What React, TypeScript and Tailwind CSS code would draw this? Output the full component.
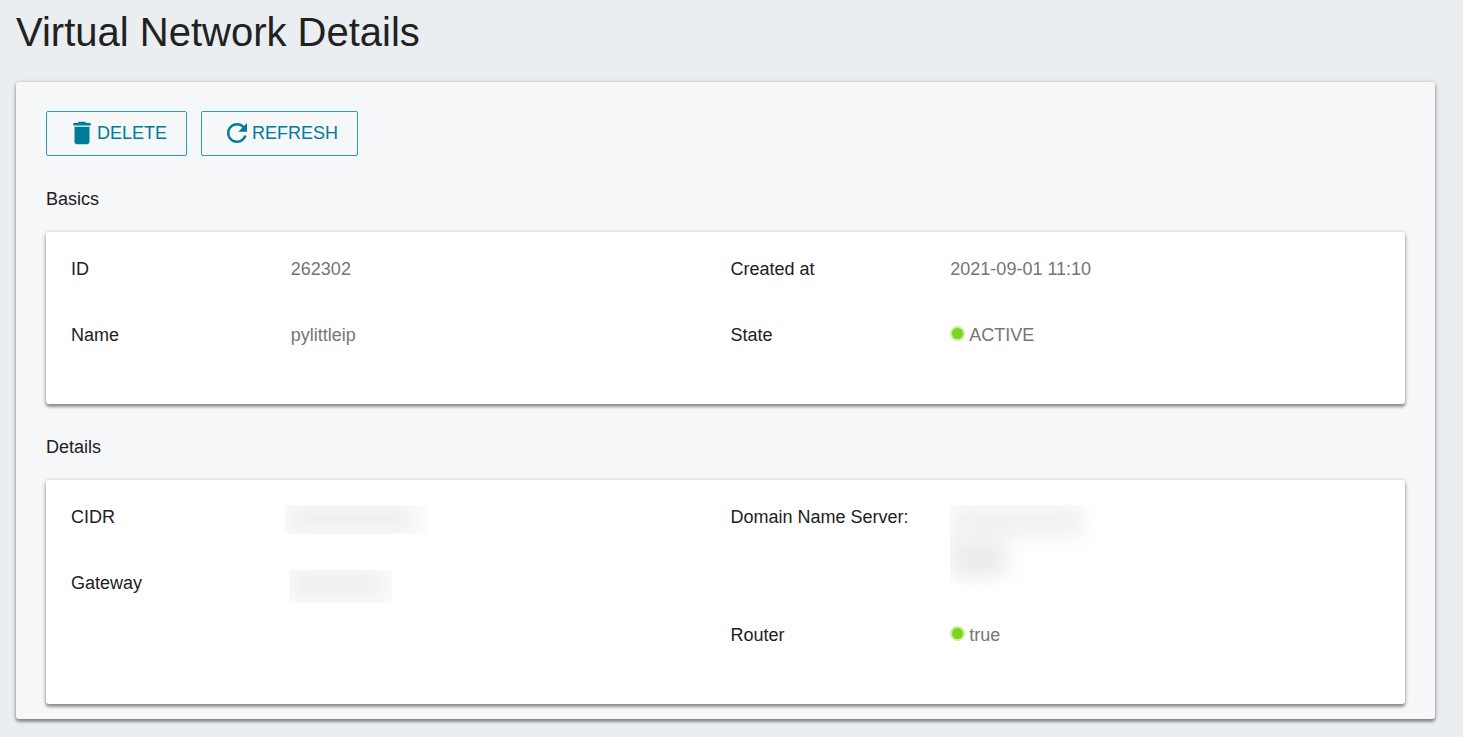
import type { ReactNode } from "react";

function Card({ className, children }: { className?: string; children: ReactNode }) {
  return (
    <div className={`${className} rounded-[3px] shadow-[0_1px_4px_rgba(0,0,0,0.3),0_3px_3px_rgba(0,0,0,0.3)]`}>
      {children}
    </div>
  );
}

function Row({ label, children }: { label: string; children: ReactNode }) {
  return (
    <div className="grid grid-cols-3 mb-10">
      <dt className="text-[#212121]">{label}</dt>
      <dd className="col-span-2 text-[#757575]">{children}</dd>
    </div>
  );
}

function Status({ children }: { children: ReactNode }) {
  return (
    <span className="flex items-center gap-1">
      <span className="w-[15px] h-[15px] mb-1 rounded-full bg-[#7ed321] border-2 border-[#c9efa0]" />
      <span>{children}</span>
    </span>
  );
}

export default function App() {
  return (
    <main className="min-h-screen bg-[#eaeef1] pl-4 pr-7 pb-4 font-['Liberation_Sans',Arial,sans-serif] text-[18px] leading-[26px] text-[#212121]">
      <h1 className="pt-1 pb-[22px] text-[40px] leading-[56px]">Virtual Network Details</h1>
      <Card className="bg-[#f5f7f9] px-[30px] pt-[29px] pb-[15px]">
        <div className="flex gap-[14px]">
          <button type="button" className="flex items-center h-[45px] pl-5 pr-[19px] pb-0.5 border border-[#25a0b5] rounded-[2px] text-[#007c99]">
            <svg viewBox="0 0 24 24" className="w-[30px] h-[30px] fill-current" aria-hidden="true">
              <path d="M6 19c0 1.1.9 2 2 2h8c1.1 0 2-.9 2-2V7H6v12zM19 4h-3.500l-1-1h-5l-1 1H5v2h14V4z" />
            </svg>
            DELETE
          </button>
          <button type="button" className="flex items-center h-[45px] pl-5 pr-[19px] pb-0.5 border border-[#25a0b5] rounded-[2px] text-[#007c99]">
            <svg viewBox="0 0 24 24" className="w-[30px] h-[30px] fill-current" aria-hidden="true">
              <path d="M17.650 6.350C16.200 4.900 14.210 4 12 4c-4.420 0-7.990 3.580-7.990 8s3.570 8 7.990 8c3.730 0 6.840-2.550 7.730-6h-2.080c-.82 2.330-3.040 4-5.650 4-3.310 0-6-2.690-6-6s2.690-6 6-6c1.660 0 3.140.69 4.220 1.780L13 11h7V4l-2.350 2.350z" />
            </svg>
            REFRESH
          </button>
        </div>

        <h2 className="mt-[30px] mb-5">Basics</h2>
        <Card className="bg-white grid grid-cols-2 pl-[25px] pr-[15px] pt-6 pb-4">
          <dl>
            <Row label="ID">262302</Row>
            <Row label="Name">pylittleip</Row>
          </dl>
          <dl>
            <Row label="Created at">2021-09-01 11:10</Row>
            <Row label="State">
              <Status>ACTIVE</Status>
            </Row>
          </dl>
        </Card>

        <h2 className="mt-[30px] mb-5">Details</h2>
        <Card className="bg-white grid grid-cols-2 pl-[25px] pr-[15px] pt-6 pb-4">
          <dl>
            {/* masked addresses */}
            <Row label="CIDR">
              <div className="h-[26px] pt-px -ml-1.5">
                <div className="w-[143px] h-[29px] overflow-hidden bg-[#fcfcfc]">
                  <div className="w-[124px] h-5 mt-1 ml-1 bg-[#ebebeb] blur-[10px]" />
                </div>
              </div>
            </Row>
            <Row label="Gateway">
              <div className="h-[26px] -ml-0.5">
                <div className="w-[103px] h-[33px] overflow-hidden bg-[#fbfbfb]">
                  <div className="w-[88px] h-5 mt-1 ml-1 bg-[#ebebeb] blur-[10px]" />
                </div>
              </div>
            </Row>
          </dl>
          <dl>
            <Row label="Domain Name Server:">
              <div className="h-[78px] pt-px">
                <div className="w-[147px] h-20 overflow-hidden">
                  <div className="w-[134px] h-8 bg-[#f1f1f1] blur-[10px]" />
                  <div className="w-14 h-10 bg-[#ebebeb] blur-[10px]" />
                </div>
              </div>
            </Row>
            <Row label="Router">
              <Status>true</Status>
            </Row>
          </dl>
        </Card>
      </Card>
    </main>
  );
}
